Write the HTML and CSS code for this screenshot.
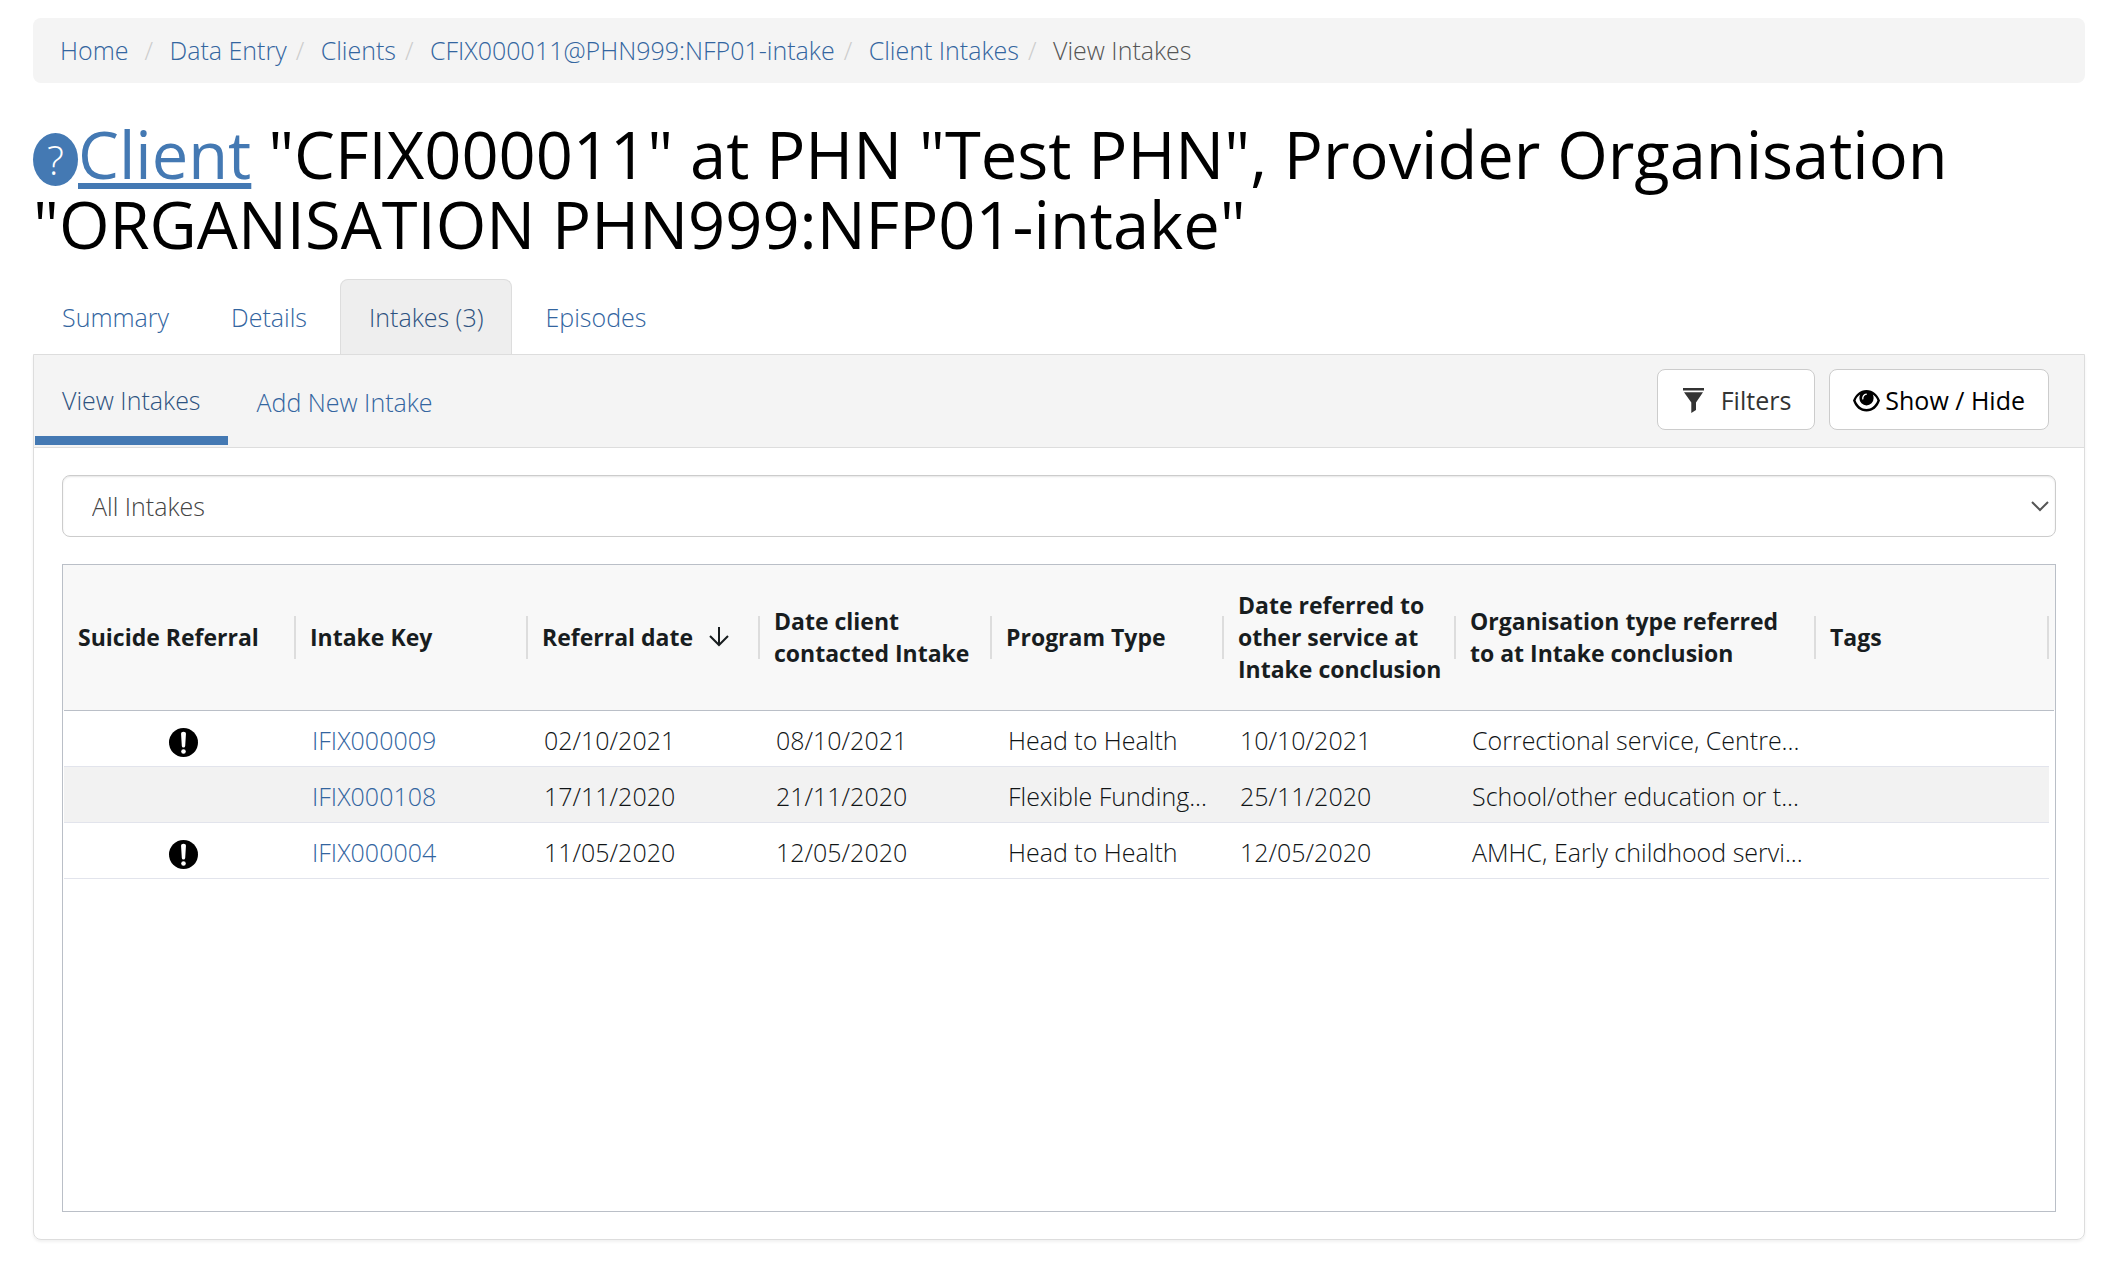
FILE: index.html
```html
<!DOCTYPE html>
<html lang="en">
<head>
<meta charset="utf-8">
<meta name="viewport" content="width=device-width, initial-scale=1">
<title>View Intakes</title>
<link rel="stylesheet" href="styles.css">
</head>
<body>
<nav aria-label="Breadcrumb">
  <ol class="breadcrumb">
    <li><a href="#">Home</a></li>
    <li><a href="#">Data Entry</a></li>
    <li><a href="#">Clients</a></li>
    <li><a href="#">CFIX000011@PHN999:NFP01-intake</a></li>
    <li><a href="#">Client Intakes</a></li>
    <li class="current" aria-current="page">View Intakes</li>
  </ol>
</nav>
<main>
  <h1><a class="help" href="#" aria-label="Help">?</a><a class="client-link" href="#">Client</a> "CFIX000011" at PHN "Test PHN", Provider Organisation "ORGANISATION PHN999:NFP01-intake"</h1>
  <nav class="tabs" aria-label="Client">
    <a class="tab" href="#">Summary</a>
    <a class="tab" href="#">Details</a>
    <a class="tab active" href="#">Intakes (3)</a>
    <a class="tab" href="#">Episodes</a>
  </nav>
  <section class="panel">
    <header class="panel-heading">
      <nav class="subtabs" aria-label="Intakes">
        <a class="subtab active" href="#">View Intakes</a>
        <a class="subtab" href="#">Add New Intake</a>
      </nav>
      <div class="actions">
        <button class="btn btn-filters" type="button">
          <svg width="21" height="25" viewBox="0 0 21 25" aria-hidden="true"><path fill="currentColor" d="M0 0h21v2.500H0zM1 4.200h19L13 14.500v7.500L8.300 25V14.500z"/></svg>
          Filters
        </button>
        <button class="btn btn-columns" type="button">
          <svg width="27" height="22" viewBox="0 0 27 22" aria-hidden="true"><path fill="currentColor" fill-rule="evenodd" d="M13.500 0C20 0 24.500 4.500 27 10.500 24.500 17.500 20 21.500 13.500 21.500S2.500 17.500 0 10.500C2.500 4.500 7 0 13.500 0zM7.200 4.600C5 6 3.600 8 2.600 10.500 4.800 15.800 8.600 19 13.500 19s8.700-3.200 10.900-8.500C23.400 8 22 6 19.800 4.600 20.400 5.700 20.600 7 20.600 8.300A7.100 7.100 0 0 1 6.400 8.300C6.400 7 6.600 5.700 7.200 4.600z"/><path fill="none" stroke="#fff" stroke-width="1.300" stroke-linecap="round" d="M9.800 8.800a4 4 0 0 1 3.500-4.600"/></svg>
          Show / Hide
        </button>
      </div>
    </header>
    <div class="panel-body">
      <div class="select-wrap">
        <select class="select" aria-label="Intakes shown">
          <option>All Intakes</option>
        </select>
        <svg class="chevron" width="18" height="11" viewBox="0 0 18 11" aria-hidden="true"><path fill="none" stroke="#555" stroke-width="2" d="M1 1l8 8 8-8"/></svg>
      </div>
      <div class="grid">
        <table>
          <colgroup>
            <col class="col-std"><col class="col-std"><col class="col-std"><col class="col-std"><col class="col-std"><col class="col-std"><col class="col-wide"><col><col class="col-gutter">
          </colgroup>
          <thead>
            <tr>
              <th scope="col"><div class="head">Suicide Referral</div></th>
              <th scope="col"><div class="head">Intake Key</div></th>
              <th scope="col" aria-sort="descending"><div class="head">Referral date
                <svg width="20" height="20" viewBox="0 0 20 20" aria-hidden="true"><path fill="none" stroke="currentColor" stroke-width="2" d="M10 0v18M1 9l9 9 9-9"/></svg></div></th>
              <th scope="col"><div class="head">Date client contacted Intake</div></th>
              <th scope="col"><div class="head">Program Type</div></th>
              <th scope="col"><div class="head">Date referred to other service at Intake conclusion</div></th>
              <th scope="col"><div class="head">Organisation type referred to at Intake conclusion</div></th>
              <th scope="col"><div class="head">Tags</div></th>
              <td class="gutter"></td>
            </tr>
          </thead>
          <tbody>
            <tr>
              <td class="flag"><svg width="29" height="29" viewBox="0 0 29 29" role="img" aria-label="Yes"><circle cx="14.500" cy="14.500" r="14.500"/><path fill="#fff" d="M12 5.500q0-1.700 2.500-1.700T17 5.500l-.800 12.500q-.200 1.600-1.700 1.600T12.800 18z"/><circle cx="14.500" cy="23.500" r="2.300" fill="#fff"/></svg></td>
              <td><a href="#">IFIX000009</a></td><td>02/10/2021</td><td>08/10/2021</td><td>Head to Health</td><td>10/10/2021</td><td>Correctional service, Centre...</td><td></td><td class="gutter"></td>
            </tr>
            <tr>
              <td></td>
              <td><a href="#">IFIX000108</a></td><td>17/11/2020</td><td>21/11/2020</td><td>Flexible Funding...</td><td>25/11/2020</td><td>School/other education or t...</td><td></td><td class="gutter"></td>
            </tr>
            <tr>
              <td class="flag"><svg width="29" height="29" viewBox="0 0 29 29" role="img" aria-label="Yes"><circle cx="14.500" cy="14.500" r="14.500"/><path fill="#fff" d="M12 5.500q0-1.700 2.500-1.700T17 5.500l-.800 12.500q-.200 1.600-1.700 1.600T12.800 18z"/><circle cx="14.500" cy="23.500" r="2.300" fill="#fff"/></svg></td>
              <td><a href="#">IFIX000004</a></td><td>11/05/2020</td><td>12/05/2020</td><td>Head to Health</td><td>12/05/2020</td><td>AMHC, Early childhood servi...</td><td></td><td class="gutter"></td>
            </tr>
          </tbody>
        </table>
      </div>
    </div>
  </section>
</main>
</body>
</html>
```
FILE: styles.css
```css
* { box-sizing: border-box; }

body {
  margin: 0;
  padding: 18px 25px 24px 33px;
  background: #fff;
  color: #222;
  font: 300 25px/37px "Open Sans", "Noto Sans", sans-serif;
}

a { color: #33659f; text-decoration: none; }

.breadcrumb {
  display: flex;
  margin: 0;
  padding: 14px 27px;
  list-style: none;
  background: #f4f4f4;
  border-radius: 8px;
}
.breadcrumb li:first-child { margin-right: 7px; }
.breadcrumb li + li::before {
  content: "/\00a0";
  padding: 0 10px 0 9px;
  color: #ccc;
}
.breadcrumb .current { color: #555; }

h1 {
  margin: 36px 0 20px;
  color: #000;
  font-size: 65px;
  font-weight: 400;
  line-height: 70px;
}
.help {
  display: inline-block;
  width: 45px;
  height: 53px;
  border-radius: 50%;
  background: #4479b3;
  color: #fff;
  font-size: 40px;
  font-weight: 300;
  line-height: 53px;
  text-align: center;
  vertical-align: 4px;
}
.client-link {
  color: #4479b3;
  text-decoration: underline;
  text-decoration-thickness: 6px;
  text-underline-offset: 4px;
  text-decoration-skip-ink: none;
}

.tabs { display: flex; }
.tab {
  padding: 20px 29px 18px;
  border-radius: 8px 8px 0 0;
}
.tab + .tab { margin-left: 4px; }
.tab.active {
  padding: 19px 28px 18px;
  border: 1px solid #ddd;
  border-bottom: 0;
  background: #eee;
  color: #2d5280;
}

.panel {
  border: 1px solid #ddd;
  border-radius: 0 0 8px 8px;
  box-shadow: 0 2px 3px rgba(0, 0, 0, .06);
}
.panel-heading {
  display: flex;
  justify-content: space-between;
  padding: 14px 35px 2px 1px;
  border-bottom: 1px solid #ddd;
  background: #f4f4f4;
}
.subtabs { display: flex; align-items: flex-end; }
.subtab { padding: 13px 29px 24px; }
.subtab.active {
  padding: 13px 27px 17px;
  border-bottom: 9px solid #4479b3;
  color: #2d5280;
}
.actions { display: flex; align-items: flex-start; gap: 14px; }
.btn {
  display: flex;
  align-items: center;
  height: 61px;
  padding: 2px 23px 0;
  border: 1px solid #ccc;
  border-radius: 8px;
  background: #fff;
  font: 400 25px/37px "Open Sans", "Noto Sans", sans-serif;
}
.btn-filters { gap: 17px; padding-left: 25px; color: #333; }
.btn-columns { gap: 5px; color: #000; }

.panel-body { padding: 27px 28px; }

.select-wrap { position: relative; }
.select {
  display: block;
  width: 100%;
  height: 62px;
  padding: 0 29px;
  appearance: none;
  border: 1px solid #ccc;
  border-radius: 8px;
  background: #fff;
  box-shadow: inset 0 1px 2px rgba(0, 0, 0, .1);
  color: #444;
  font: inherit;
}
.chevron {
  position: absolute;
  top: 26px;
  right: 7px;
  pointer-events: none;
}

.grid {
  min-height: 648px;
  margin-top: 27px;
  padding: 0 1px;
  border: 1px solid #babfc7;
  background: linear-gradient(#f8f8f8 145px, #fff 145px);
}
table {
  width: 100%;
  border-spacing: 0;
  table-layout: fixed;
}
.col-std { width: 232px; }
.col-wide { width: 360px; }
.col-gutter { width: 5px; }

thead th, thead td {
  height: 146px;
  padding: 0 0 1px;
  border-bottom: 1px solid #babfc7;
  background: #f8f8f8;
}
.head {
  display: flex;
  align-items: center;
  gap: 16px;
  height: 43px;
  padding: 0 8px 0 14px;
  border-right: 2px solid #ddd;
  color: #181d1f;
  font-size: 23px;
  font-weight: 700;
  line-height: 32px;
  text-align: left;
}
.head svg { flex: none; }

tbody td {
  height: 56px;
  padding: 3px 8px 0 16px;
  border-bottom: 1px solid #e2e4ec;
  color: #101416;
  white-space: nowrap;
}
tbody tr:nth-child(even) td { background: #f2f2f2; }
tbody td.gutter, tbody tr:nth-child(even) td.gutter {
  padding: 0;
  border: 0;
  background: #fff;
}
tbody .flag { padding-right: 10px; }
.flag svg { display: block; margin: 4px auto 0; }
```
